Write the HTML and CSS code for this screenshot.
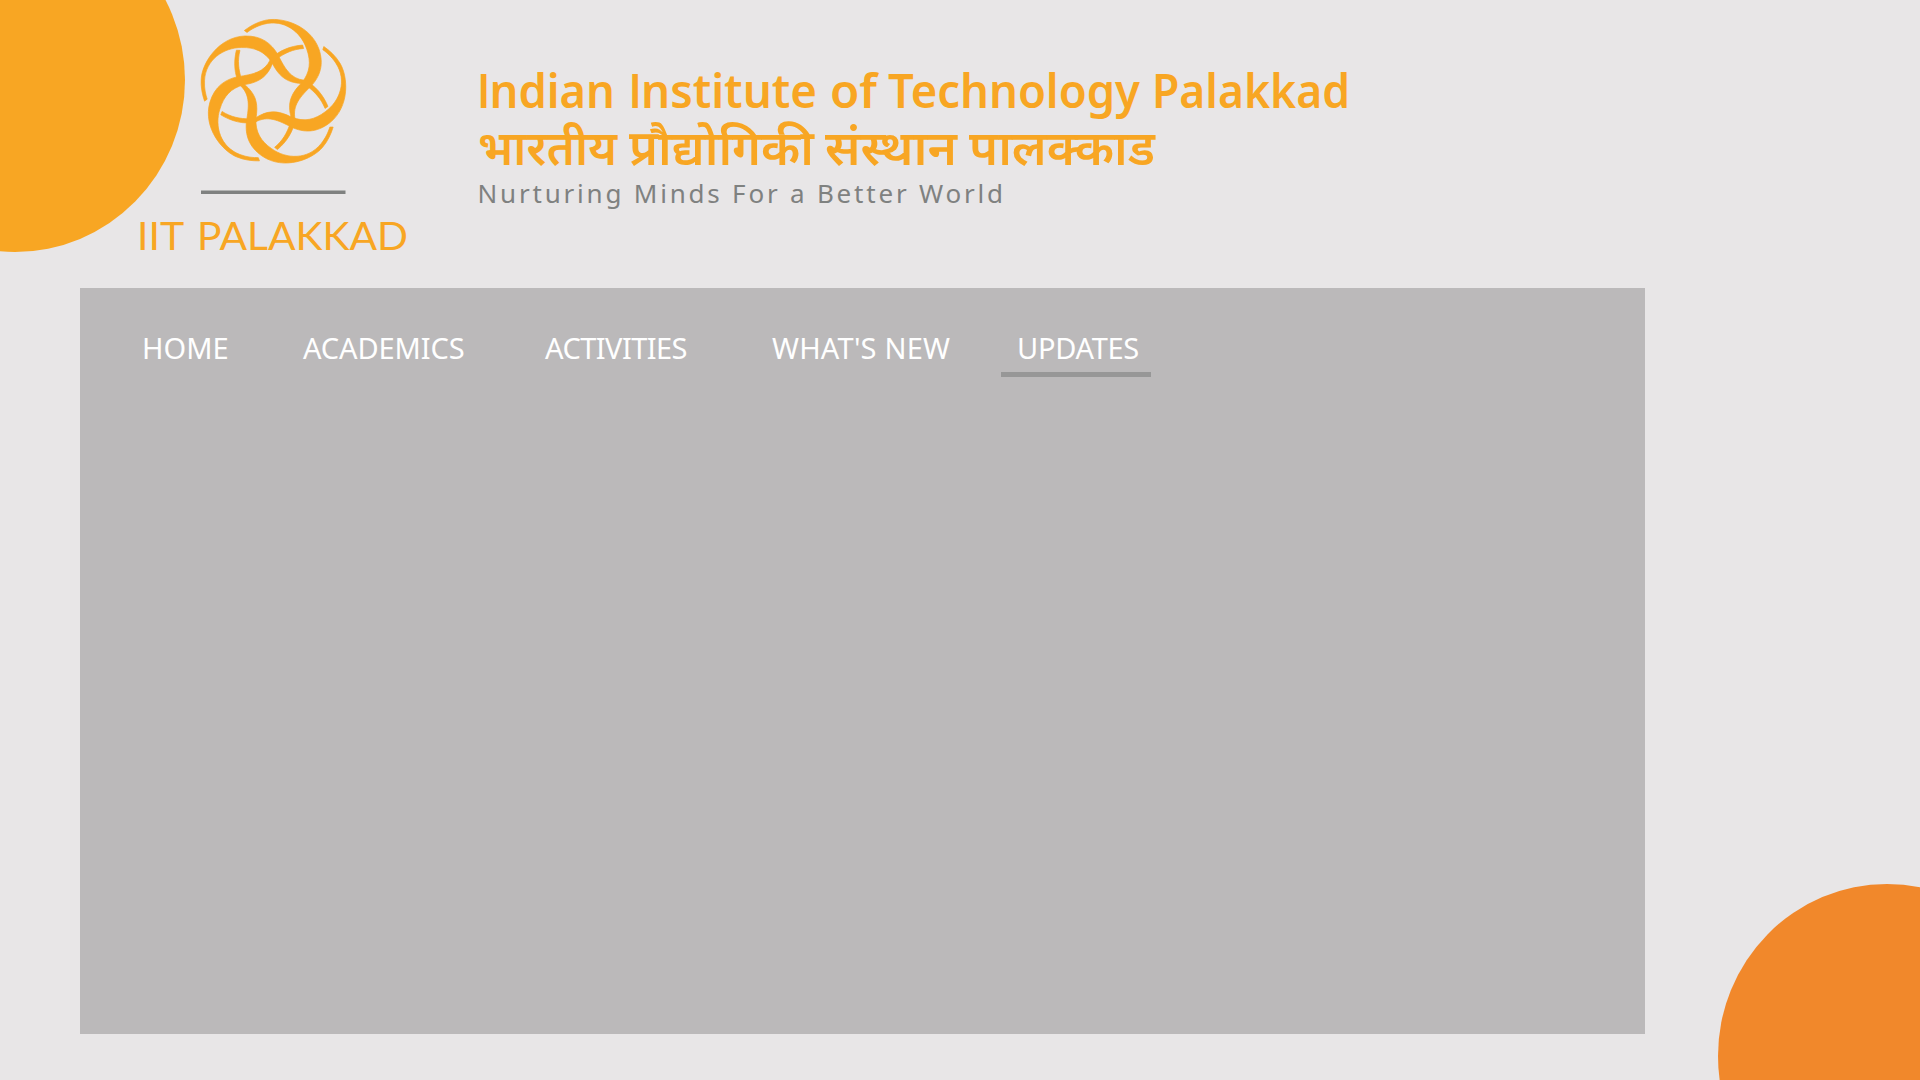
FILE: index.html
```html
<!DOCTYPE html>
<html lang="en">
<head>
<meta charset="utf-8">
<title>IIT Palakkad</title>
<link rel="stylesheet" href="styles.css">
</head>
<body>
<svg class="backdrop" viewBox="0 0 1920 1080" aria-hidden="true">
  <ellipse class="circle-top" cx="15" cy="80" rx="170" ry="172"/>
  <ellipse class="circle-bottom" cx="1887" cy="1056" rx="169" ry="172"/>
</svg>
<header class="header">
  <svg class="logo" viewBox="0 0 270 250" role="img" aria-label="IIT Palakkad">
    <defs>
      <path id="strand" d="M43 270C36 250 31 226 33 202C36 155 85 76 165 73C215 72 245 95 265 130C285 170 302 202 345 207C378 222 402 252 416 286L407 292C395 262 377 243 352 224C345 218 338 217 320 215C285 209 265 190 247 154C225 120 195 107 155 108C100 108 46 145 43 208C42 232 46 248 51 264Z"/>
    </defs>
    <g class="emblem" transform="translate(53.300 11.800) scale(.331)">
      <use href="#strand"/>
      <use href="#strand" transform="rotate(72 250 246)"/>
      <use href="#strand" transform="rotate(144 250 246)"/>
      <use href="#strand" transform="rotate(216 250 246)"/>
      <use href="#strand" transform="rotate(288 250 246)"/>
    </g>
    <rect class="rule" x="64" y="190.500" width="144.500" height="3.500"/>
    <text class="logo-name" y="250"><tspan x="0" textLength="46" lengthAdjust="spacingAndGlyphs">IIT</tspan> <tspan x="60" textLength="211" lengthAdjust="spacingAndGlyphs">PALAKKAD</tspan></text>
  </svg>
  <svg class="wordmark" viewBox="0 0 880 160">
    <text class="title" y="48.300"><tspan class="capital" x="-2.500">I</tspan><tspan x="10.500" textLength="125.500" lengthAdjust="spacingAndGlyphs">ndian</tspan> <tspan class="capital" x="149">I</tspan><tspan x="162" textLength="176" lengthAdjust="spacingAndGlyphs">nstitute</tspan> <tspan x="351" textLength="47" lengthAdjust="spacingAndGlyphs">of</tspan> <tspan x="409" textLength="252" lengthAdjust="spacingAndGlyphs">Technology</tspan> <tspan x="673" textLength="198" lengthAdjust="spacingAndGlyphs">Palakkad</tspan></text>
    <text class="title-hindi" y="105" lang="hi"><tspan x="-1" textLength="139" lengthAdjust="spacingAndGlyphs">भारतीय</tspan> <tspan x="150" textLength="185" lengthAdjust="spacingAndGlyphs">प्रौद्योगिकी</tspan> <tspan x="346" textLength="132" lengthAdjust="spacingAndGlyphs">संस्थान</tspan> <tspan x="490" textLength="186" lengthAdjust="spacingAndGlyphs">पालक्काड</tspan></text>
    <text class="tagline" x="-1.500" y="143.300" textLength="525.500" lengthAdjust="spacing">Nurturing Minds For a Better World</text>
  </svg>
</header>
<main class="panel">
  <nav class="nav">
    <a class="home">HOME</a>
    <a class="academics">ACADEMICS</a>
    <a class="activities">ACTIVITIES</a>
    <a class="news">WHAT'S NEW</a>
    <a class="updates">UPDATES</a>
  </nav>
</main>
</body>
</html>
```
FILE: styles.css
```css
* { box-sizing: border-box; }
body {
  margin: 0;
  width: 1920px;
  height: 1080px;
  overflow: hidden;
  position: relative;
  background: #e8e6e7;
  font-family: "Noto Sans", "Open Sans", sans-serif;
}
.backdrop { position: absolute; inset: 0; width: 1920px; height: 1080px; z-index: -1; overflow: hidden; }
.circle-top { fill: #f8a623; }
.circle-bottom { fill: #f1882b; }
.header { display: flex; height: 288px; padding-left: 137px; gap: 72px; }
.logo { width: 270px; height: 250px; overflow: visible; }
.emblem, .logo-name, .title, .title-hindi { fill: #f8a623; }
.emblem { stroke: #f8a623; stroke-width: 2; }
.rule { fill: #7f8180; }
.logo-name { font: 400 39px Lato, sans-serif; }
.wordmark { width: 880px; height: 160px; margin-top: 60px; overflow: visible; }
.title { font: 600 47px "Noto Sans", sans-serif; }
.capital { font-family: "Open Sans", sans-serif; }
.title-hindi { font: 600 48px "Noto Sans", "Noto Sans Devanagari", sans-serif; }
.tagline { font: 400 26px "Noto Sans", sans-serif; fill: #7f8180; }
.panel { width: 1565px; height: 746px; margin-left: 80px; padding-top: 39px; background: #bbb9ba; }
.nav { display: flex; align-items: flex-start; padding-left: 62px; font-size: 29px; line-height: 42px; color: #fff; }
.nav a { white-space: nowrap; height: 50px; }
.home { width: 161px; }
.academics { width: 242px; letter-spacing: -.1px; }
.activities { width: 227px; letter-spacing: -.55px; }
.news { width: 229px; letter-spacing: .2px; }
.nav .updates { width: 150px; padding-left: 16px; letter-spacing: -.3px; border-bottom: 5px solid #979797; }
```
